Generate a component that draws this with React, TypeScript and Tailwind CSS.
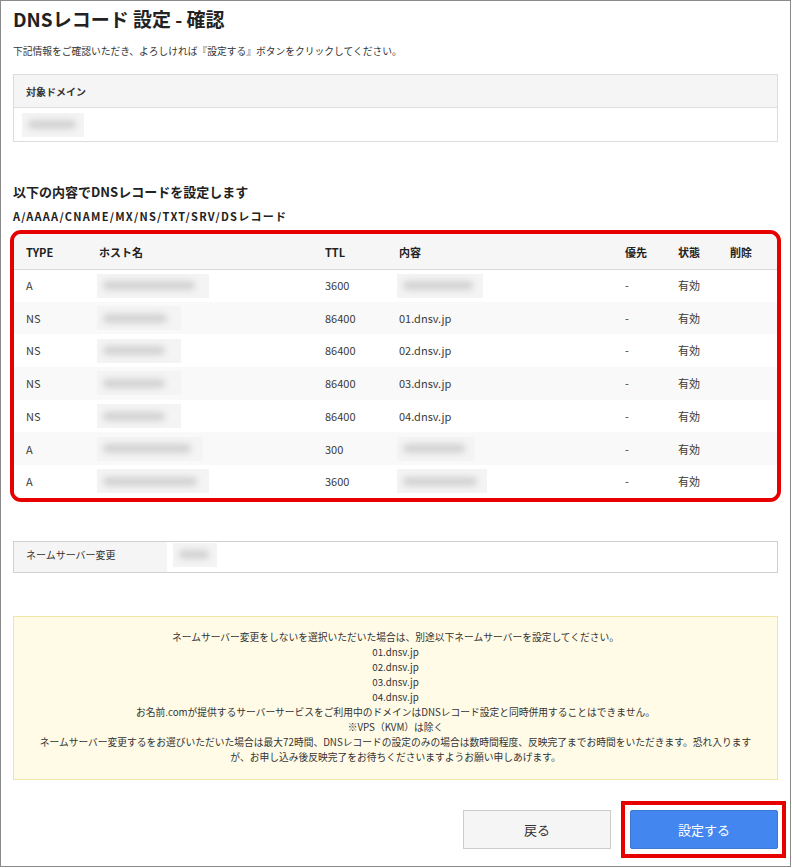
import React from "react";

const font = { fontFamily: '"Noto Sans CJK JP", "Noto Sans", sans-serif' };

function Blur({ w, bar }: { w: string; bar: string }) {
  return (
    <div className={`h-[24px] bg-[#f4f4f4] flex items-center px-[6px] ${w}`}>
      <div className={`h-[9px] bg-[#d2d2d2] blur-[3px] rounded-full ${bar}`} />
    </div>
  );
}

type Row = {
  type: string;
  hostW: string;
  hostBar: string;
  ttl: string;
  content?: string;
  cW?: string;
  cBar?: string;
};

const rows: Row[] = [
  { type: "A", hostW: "w-[112px]", hostBar: "w-[92px]", ttl: "3600", cW: "w-[86px]", cBar: "w-[70px]" },
  { type: "NS", hostW: "w-[84px]", hostBar: "w-[64px]", ttl: "86400", content: "01.dnsv.jp" },
  { type: "NS", hostW: "w-[84px]", hostBar: "w-[62px]", ttl: "86400", content: "02.dnsv.jp" },
  { type: "NS", hostW: "w-[84px]", hostBar: "w-[62px]", ttl: "86400", content: "03.dnsv.jp" },
  { type: "NS", hostW: "w-[84px]", hostBar: "w-[62px]", ttl: "86400", content: "04.dnsv.jp" },
  { type: "A", hostW: "w-[106px]", hostBar: "w-[88px]", ttl: "300", cW: "w-[78px]", cBar: "w-[62px]" },
  { type: "A", hostW: "w-[112px]", hostBar: "w-[94px]", ttl: "3600", cW: "w-[90px]", cBar: "w-[74px]" },
];

export default function App() {
  return (
    <div style={font} className="w-[791px] h-[867px] border border-[#8a8a8a] bg-white text-[#333] overflow-hidden">
      <div className="pl-[12px] pr-[12px]">
        <h1 className="pt-[5px] text-[19px] leading-[26px] font-bold text-[#222]">DNSレコード 設定 - 確認</h1>
        <p className="mt-[12px] text-[9.75px] leading-[14px]">
          下記情報をご確認いただき、よろしければ『設定する』ボタンをクリックしてください。
        </p>

        <div className="mt-[16px] border border-[#dcdcdc]">
          <div className="h-[33px] bg-[#f5f5f5] border-b border-[#dcdcdc] flex items-center pl-[12px] text-[10px] font-bold">
            対象ドメイン
          </div>
          <div className="h-[33px] flex items-center pl-[8px]">
            <Blur w="w-[62px]" bar="w-[48px]" />
          </div>
        </div>

        <h2 className="mt-[41px] text-[13px] leading-[18px] font-bold text-[#222]">以下の内容でDNSレコードを設定します</h2>
        <p className="mt-[8px] text-[11px] leading-[15px] font-bold tracking-[1.25px] text-[#222]">A/AAAA/CNAME/MX/NS/TXT/SRV/DSレコード</p>
      </div>

      <div className="ml-[9px] mt-[6px] w-[771px] border-[4px] border-[#e60000] rounded-[11px] overflow-hidden">
        <table className="w-full border-collapse text-[11px] table-fixed text-[#3a3a3a]">
          <colgroup>
            <col className="w-[73px]" />
            <col className="w-[226px]" />
            <col className="w-[74px]" />
            <col className="w-[226px]" />
            <col className="w-[53px]" />
            <col className="w-[52px]" />
            <col />
          </colgroup>
          <thead>
            <tr className="h-[35px] bg-[#f6f6f6] border-b border-[#d8d8d8] font-bold text-left text-[#222]">
              <th className="pl-[12px] pt-[2px] font-bold">TYPE</th>
              <th className="pl-[12px] pt-[2px] font-bold">ホスト名</th>
              <th className="pl-[12px] pt-[2px] font-bold">TTL</th>
              <th className="pl-[12px] pt-[2px] font-bold">内容</th>
              <th className="pl-[12px] pt-[2px] font-bold">優先</th>
              <th className="pl-[12px] pt-[2px] font-bold">状態</th>
              <th className="pl-[12px] pt-[2px] font-bold">削除</th>
            </tr>
          </thead>
          <tbody>
            {rows.map((r, i) => (
              <tr key={i} className={`h-[32.7px] ${i % 2 === 1 ? "bg-[#f9f9f9]" : "bg-white"}`}>
                <td className="pl-[12px]">{r.type}</td>
                <td className="pl-[10px]">
                  <Blur w={r.hostW} bar={r.hostBar} />
                </td>
                <td className="pl-[12px]">{r.ttl}</td>
                <td className="pl-[10px]">
                  {r.content ? <span className="pl-[2px]">{r.content}</span> : <Blur w={r.cW!} bar={r.cBar!} />}
                </td>
                <td className="pl-[12px]">-</td>
                <td className="pl-[12px]">有効</td>
                <td />
              </tr>
            ))}
          </tbody>
        </table>
      </div>

      <div className="pl-[12px] pr-[12px]">
        <div className="mt-[39px] h-[32px] border border-[#d0d0d0] flex">
          <div className="w-[153px] bg-[#f5f5f5] flex items-center pl-[12px] pb-[4px] text-[10px]">ネームサーバー変更</div>
          <div className="flex items-center pl-[6px] pb-[4px]">
            <Blur w="w-[44px]" bar="w-[30px]" />
          </div>
        </div>

        <div className="mt-[43px] h-[164px] border border-[#f0e5a6] bg-[#fffbe7] pt-[13px] text-center text-[9.75px] text-[#333]">
          <p className="h-[15px] leading-[15px]">ネームサーバー変更をしないを選択いただいた場合は、別途以下ネームサーバーを設定してください。</p>
          <p className="h-[15px] leading-[15px]">01.dnsv.jp</p>
          <p className="h-[15px] leading-[15px]">02.dnsv.jp</p>
          <p className="h-[15px] leading-[15px]">03.dnsv.jp</p>
          <p className="h-[15px] leading-[15px]">04.dnsv.jp</p>
          <p className="h-[15px] leading-[15px]">お名前.comが提供するサーバーサービスをご利用中のドメインはDNSレコード設定と同時併用することはできません。</p>
          <p className="h-[15px] leading-[15px]">※VPS（KVM）は除く</p>
          <p className="h-[15px] leading-[15px] px-[10px]">
            ネームサーバー変更するをお選びいただいた場合は最大72時間、DNSレコードの設定のみの場合は数時間程度、反映完了までお時間をいただきます。恐れ入ります
          </p>
          <p className="h-[15px] leading-[15px]">が、お申し込み後反映完了をお待ちくださいますようお願い申しあげます。</p>
        </div>
      </div>

      <div className="mt-[21px] flex justify-end items-center pr-[4px]">
        <button className="w-[148px] h-[39px] bg-[#f5f5f5] border border-[#cccccc] text-[13px] text-[#333]">戻る</button>
        <div className="ml-[10px] border-[4px] border-[#e60000] pt-[5px] pb-[5px] pl-[5px] pr-[4px]">
          <button className="w-[148px] h-[39px] bg-[#4386f0] border border-[#3b78d6] rounded-[2px] text-[13px] text-white">
            設定する
          </button>
        </div>
      </div>
    </div>
  );
}
